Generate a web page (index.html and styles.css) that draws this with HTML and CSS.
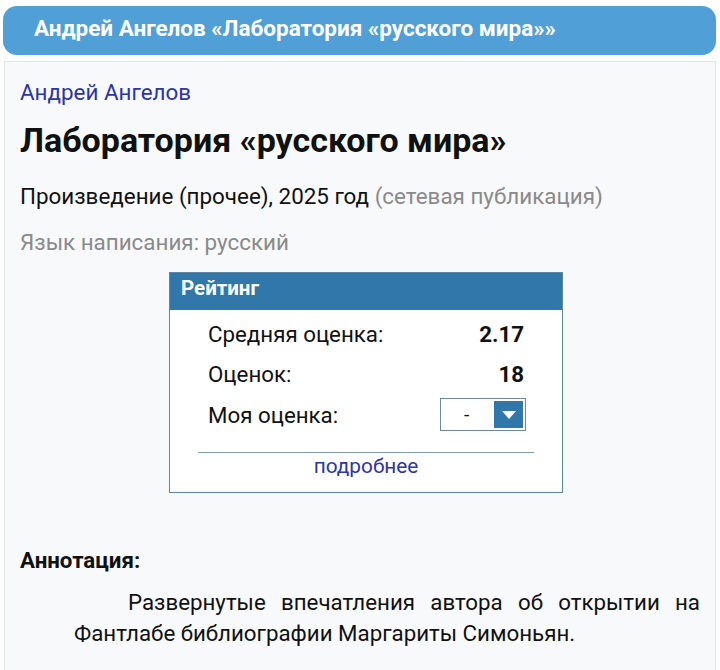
FILE: index.html
```html
<!DOCTYPE html>
<html lang="ru">
<head>
<meta charset="utf-8">
<link rel="stylesheet" href="styles.css">
</head>
<body>
<div class="topbar">Андрей Ангелов «Лаборатория «русского мира»»</div>
<div class="panel">
  <a class="author" href="#">Андрей Ангелов</a>
  <h1 class="title">Лаборатория «русского мира»</h1>
  <p class="meta">Произведение (прочее), 2025 год <span class="muted">(сетевая публикация)</span></p>
  <p class="lang">Язык написания: русский</p>
  <div class="rating">
    <div class="rating-head">Рейтинг</div>
    <div class="rating-body">
      <div class="row"><span>Средняя оценка:</span><b>2.17</b></div>
      <div class="row"><span>Оценок:</span><b>18</b></div>
      <div class="row"><span>Моя оценка:</span>
        <div class="select"><span class="dash">-</span><span class="btn"><svg width="18" height="10" viewBox="0 0 18 10"><path d="M2 1h14l-7 8z" fill="#fff"/></svg></span></div>
      </div>
      <div class="more"><a href="#">подробнее</a></div>
    </div>
  </div>
  <h3 class="ann-title">Аннотация:</h3>
  <p class="ann">Развернутые впечатления автора об открытии на Фантлабе библиографии Маргариты Симоньян.</p>
</div>
</body>
</html>
```
FILE: styles.css
```css
html, body { margin: 0; padding: 0; background: #ffffff; }
body {
  font-family: Roboto, "Noto Sans", sans-serif;
  color: #111;
  padding: 6px 4px 0 3px;
}
.topbar {
  background: #519fd7;
  color: #fff;
  font-weight: 700;
  font-size: 22.5px;
  height: 49px;
  line-height: 44px;
  padding-left: 31px;
  border-radius: 14px;
  box-sizing: border-box;
  white-space: nowrap;
}
.panel {
  margin: 6px 0 0 1px;
  background: #f8f9fb;
  border: 1px solid #e6e6e8;
  border-bottom: none;
  padding: 16px 15px 30px 15px;
  height: 620px;
  box-sizing: border-box;
}
.author {
  display: block;
  color: #2b35a8;
  text-decoration: none;
  font-size: 22.4px;
  line-height: 28px;
}
.title {
  font-size: 34px;
  font-weight: 700;
  margin: 14px 0 0;
  line-height: 40px;
}
.meta {
  font-size: 22.4px;
  margin: 21px 0 0;
  line-height: 30px;
}
.muted { color: #8a8a8a; }
.lang {
  font-size: 22.4px;
  color: #8a8a8a;
  margin: 16px 0 0;
  line-height: 30px;
}
.rating {
  width: 394px;
  margin: 15px 0 0 149px;
  border: 1px solid #5d87a6;
  background: #fff;
  box-sizing: border-box;
}
.rating-head {
  background: #3277a9;
  color: #fff;
  font-weight: 700;
  font-size: 20.5px;
  height: 37px;
  line-height: 30px;
  padding-left: 11px;
}
.rating-body { padding: 3px 28px 14px 28px; }
.row {
  display: flex;
  justify-content: space-between;
  align-items: center;
  padding: 0 10px;
  font-size: 22.3px;
  height: 41px;
}
.row:nth-child(2) { height: 40px; }
.row b { font-weight: 700; }
.select {
  width: 86px;
  height: 33px;
  border: 1px solid #6c8aa3;
  box-sizing: border-box;
  display: flex;
  align-items: center;
  justify-content: space-between;
  padding: 2px 2px 2px 23px;
  margin-right: -2px;
}
.dash { font-size: 19px; }
.btn {
  width: 29px;
  height: 27px;
  background: #3277a9;
  display: flex;
  align-items: center;
  justify-content: center;
}
.more {
  border-top: 1px solid #7f9aaa;
  margin-top: 17px;
  text-align: center;
  padding-top: 1px;
  font-size: 20.8px;
}
.more a { color: #2b35a8; text-decoration: none; }
.ann-title {
  font-size: 22.3px;
  font-weight: 700;
  margin: 52px 0 0;
  line-height: 30px;
}
.ann {
  font-size: 22.3px;
  margin: 12px 0 0 54px;
  text-align: justify;
  text-indent: 54px;
  line-height: 31px;
}
```
